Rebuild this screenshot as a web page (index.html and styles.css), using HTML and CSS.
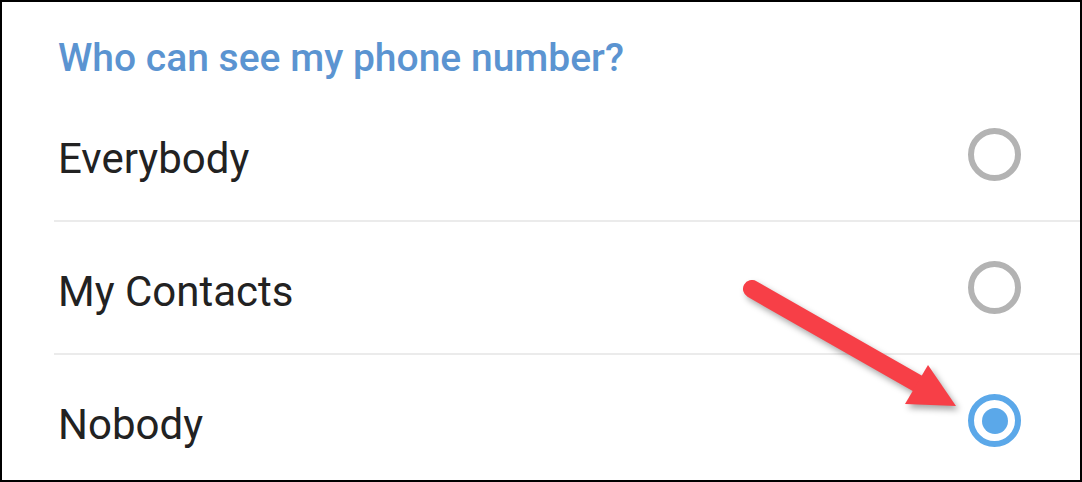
FILE: index.html
```html
<!DOCTYPE html>
<html lang="en">
<head>
    <meta charset="UTF-8">
    <meta name="viewport" content="width=device-width, initial-scale=1.0">
    <title>Phone number privacy</title>
    <link rel="stylesheet" href="styles.css">
</head>
<body>
<div class="frame">
    <h2 class="section-title">Who can see my phone number?</h2>

    <div class="option">
        <span class="option-label">Everybody</span>
        <span class="radio"></span>
    </div>
    <div class="option">
        <span class="option-label">My Contacts</span>
        <span class="radio"></span>
    </div>
    <div class="option">
        <span class="option-label">Nobody</span>
        <span class="radio checked"></span>
    </div>

    <!-- callout arrow pointing at the selected option -->
    <svg class="arrow" width="1082" height="482" viewBox="0 0 1082 482">
        <line x1="752" y1="289" x2="922" y2="386" stroke="#f73f47" stroke-width="18" stroke-linecap="round"/>
        <polygon points="928,365 905,404 956,406" fill="#f73f47"/>
    </svg>
</div>
</body>
</html>
```

FILE: styles.css
```css
body {
    margin: 0;
    font-family: Roboto, "Noto Sans", Arial, sans-serif;
    background: #ffffff;
}

.frame {
    position: relative;
    box-sizing: border-box;
    width: 1082px;
    height: 482px;
    border: 2px solid #000000;
    overflow: hidden;
}

.section-title {
    margin: 0 0 7px 0;
    padding: 33px 0 0 56px;
    font-size: 39px;
    line-height: 47px;
    font-weight: 500;
    color: #5b94d1;
}

.option {
    display: flex;
    align-items: center;
    justify-content: space-between;
    height: 131px;
    margin-left: 52px;
    padding: 0 59px 0 4px;
    border-bottom: 2px solid #ebebeb;
}

.option-label {
    padding-top: 8px;
    font-size: 42px;
    color: #222222;
}

.radio {
    box-sizing: border-box;
    width: 53px;
    height: 53px;
    border: 6px solid #b3b3b3;
    border-radius: 50%;
    display: flex;
    align-items: center;
    justify-content: center;
}

.radio.checked {
    border-color: #5ba8e9;
}

.radio.checked::after {
    content: "";
    width: 26px;
    height: 26px;
    border-radius: 50%;
    background: #5ba8e9;
}

.arrow {
    position: absolute;
    left: -2px;
    top: -2px;
    filter: drop-shadow(3px 4px 3px rgba(0, 0, 0, 0.35));
}
```
